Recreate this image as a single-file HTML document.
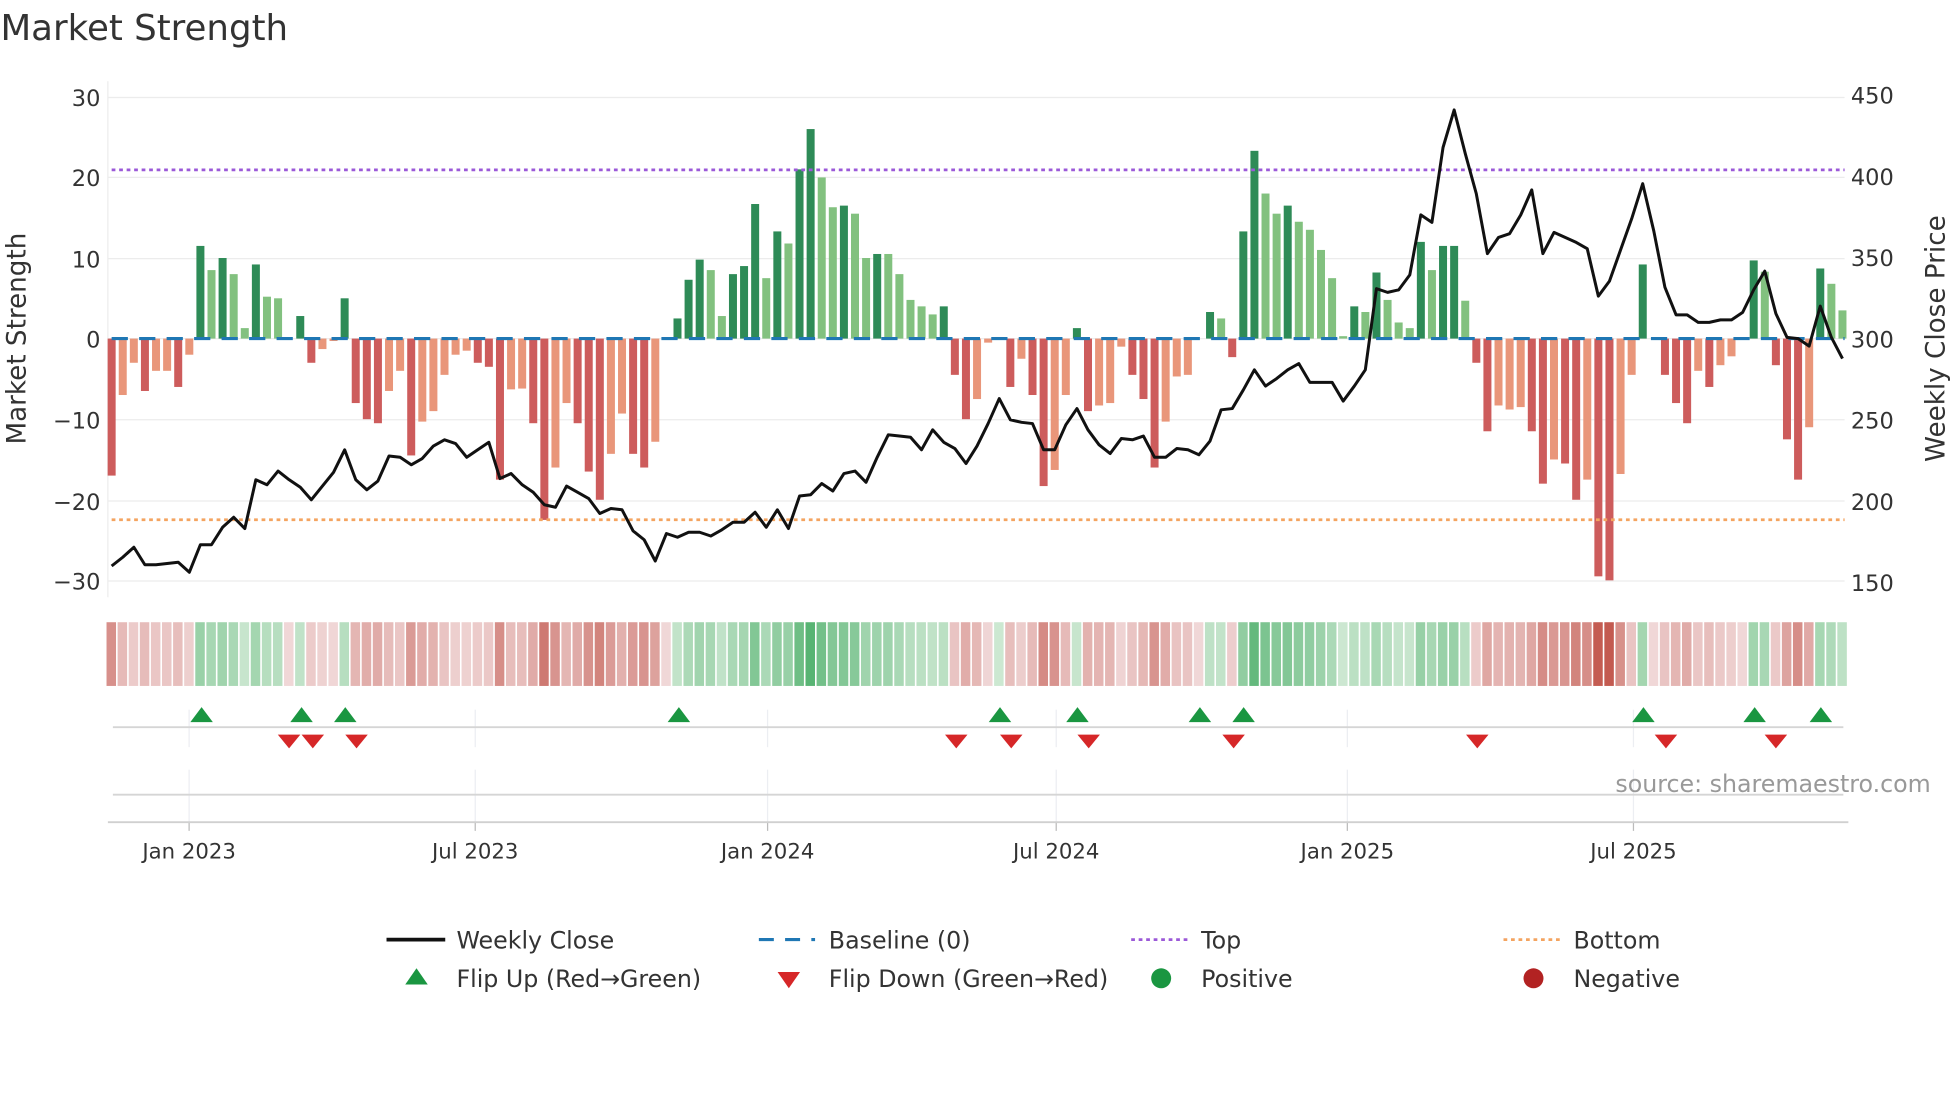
<!DOCTYPE html>
<html><head><meta charset="utf-8">
<style>
html,body{margin:0;padding:0;background:#fff;width:1960px;height:1102px;overflow:hidden}
svg{display:block}
text{font-family:"DejaVu Sans","Liberation Sans",sans-serif;fill:#333}
</style></head><body>
<svg id="c" width="1960" height="1102" viewBox="0 0 1568 882" xmlns="http://www.w3.org/2000/svg">
<text x="0" y="32" font-size="28.5" fill="#333">Market Strength</text>
<g id="grid"></g>
<g id="bars"></g>
<g id="heat"></g>
<g id="rest"></g>
</svg>
<script>
var NS="http://www.w3.org/2000/svg";
function el(p,t,a,txt){var e=document.createElementNS(NS,t);for(var k in a)e.setAttribute(k,a[k]);if(txt!==undefined)e.textContent=txt;document.getElementById(p).appendChild(e);return e;}
var V=[[-17,1],[-7,0],[-3,0],[-6.5,1],[-4,0],[-4,0],[-6,1],[-2,0],[11.5,1],[8.5,0],[10,1],[8,0],[1.3,0],[9.2,1],[5.2,0],[5,0],[0,0],[2.8,1],[-3,1],[-1.3,0],[-0.3,0],[5,1],[-8,1],[-10,1],[-10.5,1],[-6.5,0],[-4,0],[-14.5,1],[-10.3,0],[-9,0],[-4.5,0],[-2,0],[-1.5,0],[-3,1],[-3.5,1],[-17.5,1],[-6.3,0],[-6.2,0],[-10.5,1],[-22.5,1],[-16,0],[-8,0],[-10.5,1],[-16.5,1],[-20,1],[-14.3,0],[-9.3,0],[-14.3,1],[-16,1],[-12.8,0],[0,0],[2.5,1],[7.3,1],[9.8,1],[8.5,0],[2.8,0],[8,1],[9,1],[16.7,1],[7.5,0],[13.3,1],[11.8,0],[21,1],[26,1],[20,0],[16.3,0],[16.5,1],[15.5,0],[10,0],[10.5,1],[10.5,0],[8,0],[4.8,0],[4,0],[3,0],[4,1],[-4.5,1],[-10,1],[-7.5,0],[-0.5,0],[0.2,0],[-6,1],[-2.5,0],[-7,1],[-18.3,1],[-16.3,0],[-7,0],[1.3,1],[-9,1],[-8.3,0],[-8,0],[-1,0],[-4.5,1],[-7.5,1],[-16,1],[-10.3,0],[-4.7,0],[-4.5,0],[0,0],[3.3,1],[2.5,0],[-2.3,1],[13.3,1],[23.3,1],[18,0],[15.5,0],[16.5,1],[14.5,0],[13.5,0],[11,0],[7.5,0],[0.3,0],[4,1],[3.3,0],[8.2,1],[4.8,0],[2,0],[1.3,0],[12,1],[8.5,0],[11.5,1],[11.5,1],[4.7,0],[-3,1],[-11.5,1],[-8.3,0],[-8.8,0],[-8.5,0],[-11.5,1],[-18,1],[-15,0],[-15.5,1],[-20,1],[-17.5,0],[-29.5,1],[-30,1],[-16.8,0],[-4.5,0],[9.2,1],[0,0],[-4.5,1],[-8,1],[-10.5,1],[-4,0],[-6,1],[-3.3,0],[-2.2,0],[0,0],[9.7,1],[8.3,0],[-3.3,1],[-12.5,1],[-17.5,1],[-11,0],[8.7,1],[6.8,0],[3.5,0]];
var P=[453,446,438,452,452,451,450,458,436,436,422,414,423,384,388,377,384,390,400,389,378,360,384,392,385,365,366,372,367,357,352,355,366,360,354,383,379,388,394,404,406,389,394,399,411,407,408,425,432,449,427,430,426,426,429,424,418,418,410,422,408,423,397,396,387,393,379,377,386,366,348,349,350,360,344,354,359,371,357,339,319,336,338,339,360,360,340,327,344,356,363,351,352,349,366,366,359,360,364,353,328,327,312,296,309,303,296,291,306,306,306,321,309,296,231,234,232,220,172,178,118,88,123,155,203,190,187,172,152,203,186,190,194,199,237,225,200,175,147,185,230,252,252,258,258,256,256,250,232,217,251,270,271,277,245,270,287];
var X0=89,DX=8.88,Y0=271,SC=6.45;
[78,142,207,271,336,401,465].forEach(function(y){el("grid","line",{x1:86,x2:1476,y1:y,y2:y,stroke:"#ececec","stroke-width":1});});
el("grid","line",{x1:86,x2:86,y1:65,y2:478,stroke:"#ececec"});
var L=[[30,78],[20,142],[10,207],[0,271],[-10,336],[-20,401],[-30,465]];
L.forEach(function(a){el("grid","text",{x:80,y:a[1]+7,"font-size":18,"text-anchor":"end"},(a[0]<0?"\u2212"+(-a[0]):a[0]));});
[[450,76],[400,141],[350,206],[300,271],[250,336],[200,401],[150,466]].forEach(function(a){el("grid","text",{x:1481,y:a[1]+7,"font-size":18},a[0]);});
el("grid","text",{x:0,y:0,"font-size":21,"text-anchor":"middle",transform:"translate(20,271) rotate(-90)"},"Market Strength");
el("grid","text",{x:0,y:0,"font-size":21,"text-anchor":"middle",transform:"translate(1556,271) rotate(-90)"},"Weekly Close Price");
V.forEach(function(v,i){var x=X0+i*DX,val=v[0],h=Math.abs(val)*SC;
 var a=Math.min(Math.abs(val)/30,1);var c;
 if(val>0.1){var r=Math.round(205-a*135),g=Math.round(232-a*60),b=Math.round(210-a*110);c="rgb("+r+","+g+","+b+")";}
 else{var r=Math.round(240-a*45),g=Math.round(215-a*125),b=Math.round(215-a*135);c="rgb("+r+","+g+","+b+")";}
 el("heat","rect",{x:x-4.1,y:498,width:7.6,height:51,fill:c});
 if(h<0.5)return;var col=val>0?(v[1]?"#2e8b57":"#82c17f"):(v[1]?"#cd5c5c":"#e9967a");el("bars","rect",{x:x-3.2,y:val>0?Y0-h:Y0,width:6.4,height:h,fill:col});
});
el("rest","line",{x1:89,x2:1476,y1:271,y2:271,stroke:"#1f77b4","stroke-width":2.5,"stroke-dasharray":"13,9"});
el("rest","line",{x1:89,x2:1476,y1:136,y2:136,stroke:"#9b59d8","stroke-width":2.2,"stroke-dasharray":"3,3"});
el("rest","line",{x1:89,x2:1476,y1:416,y2:416,stroke:"#f4a460","stroke-width":2.2,"stroke-dasharray":"3,3"});
var pts=P.map(function(y,i){return (X0+i*DX).toFixed(1)+","+y;}).join(" ");
el("rest","polyline",{points:pts,fill:"none",stroke:"#111","stroke-width":2.4,"stroke-linejoin":"round"});
var ticks=[[151,"Jan 2023"],[380,"Jul 2023"],[614,"Jan 2024"],[845,"Jul 2024"],[1078,"Jan 2025"],[1307,"Jul 2025"]];
ticks.forEach(function(a){el("rest","line",{x1:a[0],x2:a[0],y1:568,y2:598,stroke:"#eceef2"});el("rest","line",{x1:a[0],x2:a[0],y1:616,y2:658,stroke:"#eceef2"});el("rest","line",{x1:a[0],x2:a[0],y1:658,y2:665,stroke:"#bbb"});el("rest","text",{x:a[0],y:687,"font-size":17,"text-anchor":"middle"},a[1]);});
el("rest","line",{x1:90,x2:1475,y1:582,y2:582,stroke:"#d5d5d5","stroke-width":1.5});
el("rest","line",{x1:90,x2:1475,y1:636,y2:636,stroke:"#d5d5d5","stroke-width":1.5});
el("rest","line",{x1:86,x2:1479,y1:658,y2:658,stroke:"#d0d0d0","stroke-width":1.5});
[161,241,276,543,800,862,960,995,1315,1404,1457].forEach(function(x){el("rest","polygon",{points:(x-9)+",578 "+(x+9)+",578 "+x+",566",fill:"#1a9641"});});
[231,250,285,765,809,871,987,1182,1333,1421].forEach(function(x){el("rest","polygon",{points:(x-9)+",588 "+(x+9)+",588 "+x+",599",fill:"#d62728"});});
el("rest","text",{x:1545,y:634,"font-size":19,"text-anchor":"end",style:"fill:#999"},"source: sharemaestro.com");
el("rest","line",{x1:309,x2:356,y1:752,y2:752,stroke:"#111","stroke-width":3});
el("rest","text",{x:365,y:759,"font-size":19},"Weekly Close");
el("rest","line",{x1:607,x2:652,y1:752,y2:752,stroke:"#1f77b4","stroke-width":2.5,"stroke-dasharray":"12,9"});
el("rest","text",{x:663,y:759,"font-size":19},"Baseline (0)");
el("rest","line",{x1:905,x2:950,y1:752,y2:752,stroke:"#9b59d8","stroke-width":2.2,"stroke-dasharray":"3,3"});
el("rest","text",{x:961,y:759,"font-size":19},"Top");
el("rest","line",{x1:1203,x2:1248,y1:752,y2:752,stroke:"#f4a460","stroke-width":2.2,"stroke-dasharray":"3,3"});
el("rest","text",{x:1259,y:759,"font-size":19},"Bottom");
el("rest","polygon",{points:"324,788 342,788 333,775",fill:"#1a9641"});
el("rest","text",{x:365,y:790,"font-size":19},"Flip Up (Red\u2192Green)");
el("rest","polygon",{points:"622,778 640,778 631,791",fill:"#d62728"});
el("rest","text",{x:663,y:790,"font-size":19},"Flip Down (Green\u2192Red)");
el("rest","circle",{cx:929,cy:783,r:8,fill:"#1a9641"});
el("rest","text",{x:961,y:790,"font-size":19},"Positive");
el("rest","circle",{cx:1227,cy:783,r:8,fill:"#b22222"});
el("rest","text",{x:1259,y:790,"font-size":19},"Negative");
</script>
</body></html>
